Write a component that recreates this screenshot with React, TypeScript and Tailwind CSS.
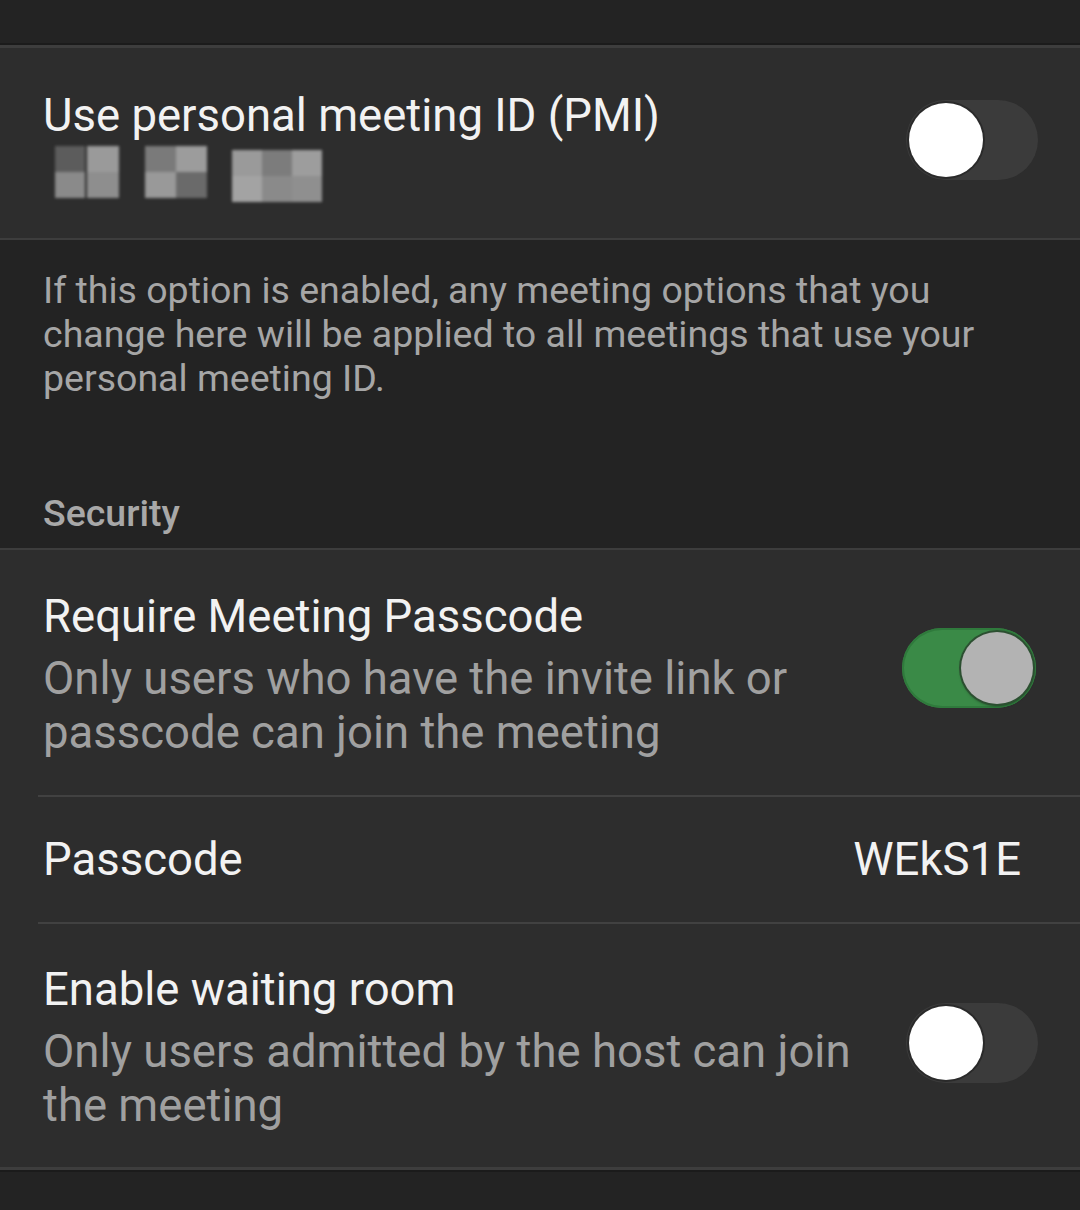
import React from "react";

function Toggle({ on }: { on: boolean }) {
  if (on) {
    return (
      <div className="relative h-[80px] w-[134px] shrink-0 rounded-full bg-[#3a8a47] shadow-[inset_0_0_0_2px_#2f7a3c]">
        <div className="absolute right-[3px] top-[4px] h-[72px] w-[72px] rounded-full bg-[#b3b3b3] shadow-[0_0_0_2px_#2c4f31,0_2px_3px_rgba(0,0,0,0.5)]" />
      </div>
    );
  }
  return (
    <div className="relative h-[80px] w-[132px] shrink-0 rounded-full bg-[#3b3b3b]">
      <div className="absolute left-[3px] top-[3px] h-[74px] w-[74px] rounded-full bg-white shadow-[0_0_0_2px_#2a2a2a]" />
    </div>
  );
}

function Redacted() {
  const tile = "h-[26px]";
  return (
    <div className="flex h-[52px] items-start gap-0 blur-[1.5px]">
      <div className="ml-[12px] grid grid-cols-2">
        <div className={`${tile} w-[30px] bg-[#5c5c5c]`} />
        <div className={`${tile} w-[32px] bg-[#9a9a9a]`} />
        <div className={`${tile} w-[30px] bg-[#8a8a8a]`} />
        <div className={`${tile} w-[32px] bg-[#8e8e8e]`} />
      </div>
      <div className="ml-[26px] grid grid-cols-2">
        <div className={`${tile} w-[31px] bg-[#7a7a7a]`} />
        <div className={`${tile} w-[31px] bg-[#9c9c9c]`} />
        <div className={`${tile} w-[31px] bg-[#999999]`} />
        <div className={`${tile} w-[31px] bg-[#6a6a6a]`} />
      </div>
      <div className="ml-[25px] mt-[4px] grid grid-cols-3">
        <div className={`${tile} w-[30px] bg-[#9a9a9a]`} />
        <div className={`${tile} w-[30px] bg-[#7c7c7c]`} />
        <div className={`${tile} w-[30px] bg-[#9d9d9d]`} />
        <div className={`${tile} w-[30px] bg-[#a3a3a3]`} />
        <div className={`${tile} w-[30px] bg-[#8a8a8a]`} />
        <div className={`${tile} w-[30px] bg-[#8f8f8f]`} />
      </div>
    </div>
  );
}

export default function App() {
  return (
    <div
      className="flex h-[1210px] w-[1080px] flex-col overflow-hidden bg-[#232323]"
      style={{ fontFamily: "Roboto, 'Noto Sans', sans-serif" }}
    >
      <div className="h-[43px] shrink-0 bg-[#232323]" />
      <div className="h-[2px] shrink-0 bg-[#1b1b1b]" />
      <div className="h-[3px] shrink-0 bg-[#3d3d3d]" />

      {/* PMI panel */}
      <div className="flex h-[190px] shrink-0 items-center justify-between bg-[#2d2d2d] pl-[43px] pr-[42px]">
        <div className="flex flex-col pt-[2px]">
          <div className="text-[45.5px] leading-[50px] text-[#f2f2f2]">Use personal meeting ID (PMI)</div>
          <div className="mt-[5px]">
            <Redacted />
          </div>
        </div>
        <div className="mt-[-6px]">
          <Toggle on={false} />
        </div>
      </div>
      <div className="h-[2px] shrink-0 bg-[#3d3d3d]" />

      {/* description */}
      <div className="flex h-[308px] shrink-0 flex-col bg-[#232323] pl-[43px]">
        <div className="pt-[28px] text-[37.5px] leading-[44px] text-[#a6a6a6]">
          If this option is enabled, any meeting options that you
          <br />
          change here will be applied to all meetings that use your
          <br />
          personal meeting ID.
        </div>
        <div className="mt-[91px] text-[37.5px] font-medium leading-[44px] text-[#a8a8a8]">Security</div>
      </div>
      <div className="h-[2px] shrink-0 bg-[#3d3d3d]" />

      {/* security panel */}
      <div className="flex shrink-0 flex-col bg-[#2d2d2d]">
        <div className="flex h-[245px] items-center justify-between pl-[43px] pr-[44px]">
          <div className="flex flex-col pt-[5px]">
            <div className="text-[45.5px] leading-[54px] text-[#f2f2f2]">Require Meeting Passcode</div>
            <div className="mt-[8px] text-[45.5px] leading-[54px] text-[#a0a0a0]">
              Only users who have the invite link or
              <br />
              passcode can join the meeting
            </div>
          </div>
          <div className="mt-[-10px]">
            <Toggle on={true} />
          </div>
        </div>
        <div className="ml-[38px] h-[2px] bg-[#414141]" />
        <div className="flex h-[125px] items-center justify-between pl-[43px] pr-[59px]">
          <div className="text-[45.5px] leading-[54px] text-[#f2f2f2]">Passcode</div>
          <div className="text-[45.5px] leading-[54px] text-[#f2f2f2]">WEkS1E</div>
        </div>
        <div className="ml-[38px] h-[2px] bg-[#414141]" />
        <div className="flex h-[243px] items-center justify-between pl-[43px] pr-[42px]">
          <div className="flex flex-col pt-[5px]">
            <div className="text-[45.5px] leading-[54px] text-[#f2f2f2]">Enable waiting room</div>
            <div className="mt-[8px] text-[45.5px] leading-[54px] text-[#a0a0a0]">
              Only users admitted by the host can join
              <br />
              the meeting
            </div>
          </div>
          <div className="mt-[-5px]">
            <Toggle on={false} />
          </div>
        </div>
      </div>
      <div className="h-[3px] shrink-0 bg-[#3d3d3d]" />
      <div className="h-[2px] shrink-0 bg-[#1b1b1b]" />
      <div className="flex-1 bg-[#232323]" />
    </div>
  );
}
